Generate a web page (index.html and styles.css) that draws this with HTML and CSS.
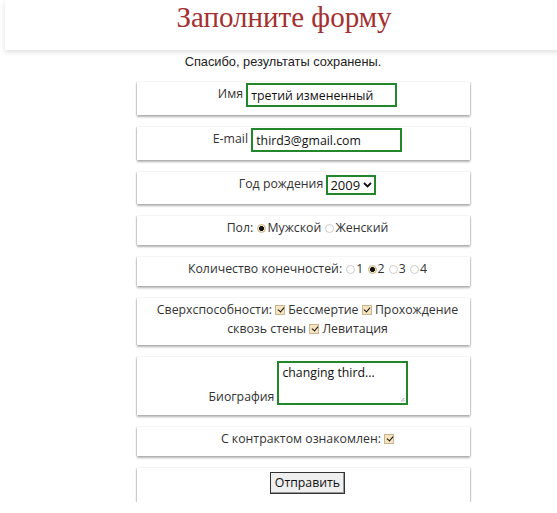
FILE: index.html
```html
<!DOCTYPE html>
<html lang="ru">
<head>
<meta charset="utf-8">
<title>Заполните форму</title>
<link rel="stylesheet" href="styles.css">
</head>
<body>
<header class="top">
  <h1 class="title">Заполните форму</h1>
</header>
<p class="notice">Спасибо, результаты сохранены.</p>
<form class="form">
  <div class="row row-input"><label>Имя <input class="field field-name" type="text" value="третий измененный"></label></div>
  <div class="row row-input"><label>E-mail <input class="field field-mail" type="text" value="third3@gmail.com"></label></div>
  <div class="row row-select"><label>Год рождения <span class="select">2009<svg class="chev" width="9" height="6" viewBox="0 0 9 6"><path d="M1 1l3.5 3.5L8 1" fill="none" stroke="#111" stroke-width="1.8"/></svg></span></label></div>
  <div class="row">Пол: <span class="radio on"></span>Мужской <span class="radio"></span>Женский</div>
  <div class="row">Количество конечностей: <span class="radio"></span>1 <span class="radio on"></span>2 <span class="radio"></span>3 <span class="radio"></span>4</div>
  <div class="row row-wide">Сверхспособности: <span class="check"></span> Бессмертие <span class="check"></span> Прохождение сквозь стены <span class="check"></span> Левитация</div>
  <div class="row row-bio"><span class="bio-label">Биография</span><span class="textarea">changing third...<svg class="grip" width="5" height="5" viewBox="0 0 5 5"><path d="M4.5 1L1 4.5M4.5 3L3 4.5" stroke="#888" stroke-width="0.8"/></svg></span></div>
  <div class="row">С контрактом ознакомлен: <span class="check"></span></div>
  <div class="row row-btn"><span class="btn">Отправить</span></div>
</form>
</body>
</html>
```
FILE: styles.css
```css
html, body { margin: 0; padding: 0; background: #fff; overflow: hidden; }
body {
  padding: 0 0 0 5px;
  font-family: "Open Sans", "Noto Sans", sans-serif;
  font-size: 12.3px;
  color: #333;
}
.top {
  margin-right: -20px;
  height: 50px;
  background: #fff;
  box-shadow: 0 2px 5px rgba(0,0,0,0.13);
  display: flex;
  justify-content: center;
  padding-right: 14px;
}
.title {
  margin: 2px 0 0;
  font-family: "Liberation Serif", serif;
  font-weight: normal;
  font-size: 29px;
  line-height: 30px;
  color: #a3302f;
}
.notice {
  margin: 4px 0 0;
  padding-left: 4px;
  text-align: center;
  font-family: "Liberation Sans", Arial, sans-serif;
  font-size: 12.8px;
  color: #222;
  line-height: 16px;
}
.form {
  width: 333px;
  margin: 12px 0 0 132px;
  display: flex;
  flex-direction: column;
  gap: 12px;
}
.row {
  text-align: center;
  padding: 2px 0 7px 8px;
  box-shadow: 0 2px 2px rgba(0,0,0,0.3), 1px 0 1px rgba(0,0,0,0.12), -1px 0 1px rgba(0,0,0,0.12);
  line-height: 20px;
}
.row-input { padding: 1px 0 8px 8px; }
.row-select { padding: 2px 0 9px 8px; }
.field {
  font-family: "Open Sans", sans-serif;
  font-size: 12.3px;
  color: #111;
  border: 2px solid #22862a;
  padding: 0 3px;
  height: 24px;
  box-sizing: border-box;
  width: 151px;
  vertical-align: middle;
  outline: none;
}
.select {
  display: inline-flex;
  align-items: center;
  gap: 3px;
  border: 2px solid #22862a;
  height: 20px;
  box-sizing: border-box;
  padding: 0 2px 0 2px;
  color: #111;
  font-size: 13px;
  vertical-align: middle;
}
.radio {
  display: inline-block;
  width: 9px;
  height: 9px;
  border: 1px solid #ccc;
  border-radius: 50%;
  box-sizing: border-box;
  margin: 0 1px 0 1px;
  vertical-align: -1px;
}
.radio.on {
  border-color: #c9b48c;
  background: radial-gradient(circle, #111 0 2.2px, #f4e6cc 2.6px);
}
.check {
  display: inline-block;
  width: 10px;
  height: 10px;
  background: #f6e3c0;
  border: 1px solid #c8b48e;
  box-sizing: border-box;
  vertical-align: -1px;
  position: relative;
}
.check::after {
  content: "";
  position: absolute;
  left: 2.5px;
  top: 0px;
  width: 3px;
  height: 5px;
  border: solid #111;
  border-width: 0 1.5px 1.5px 0;
  transform: rotate(40deg);
}
.row-wide { padding: 2px 6px 7px 14px; line-height: 19px; }
.row-bio {
  display: flex;
  justify-content: center;
  align-items: flex-end;
  padding: 4px 0 10px 10px;
}
.bio-label { line-height: 16px; }
.textarea {
  margin-left: 3px;
  width: 131px;
  height: 44px;
  border: 2px solid #22862a;
  box-sizing: border-box;
  text-align: left;
  padding: 1px 3px;
  color: #111;
  line-height: 18px;
  position: relative;
}
.grip { position: absolute; right: 1px; bottom: 1px; }
.row-btn { padding: 4px 0 8px 8px; }
.btn {
  display: inline-block;
  border: 1px solid #333;
  background: #efefef;
  padding: 0 4px;
  height: 22px;
  line-height: 20px;
  box-sizing: border-box;
  color: #111;
  box-shadow: inset -1px -1px 0 #999;
}
```
